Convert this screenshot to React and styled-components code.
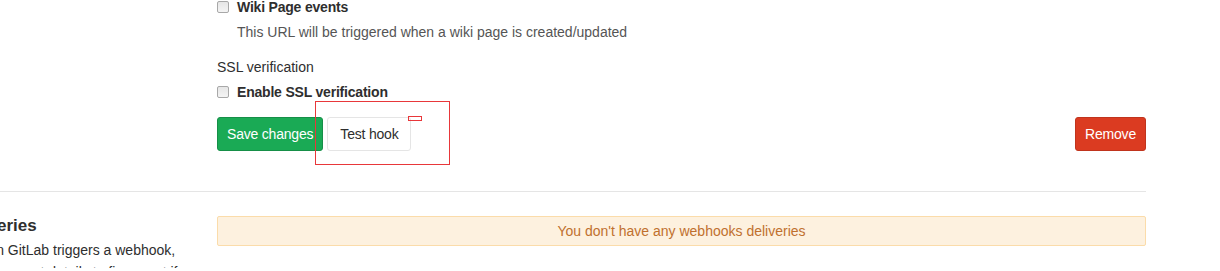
import React from 'react';
import styled, { createGlobalStyle } from 'styled-components';

const GlobalStyle = createGlobalStyle`
  html, body {
    margin: 0;
    padding: 0;
    background: #fff;
    overflow: hidden;
  }

  body {
    font-family: 'Liberation Sans', Arial, sans-serif;
    font-size: 14px;
    line-height: 20px;
    color: #2e2e2e;
  }
`;

const Page = styled.div`
  position: relative;
  width: 1251px;
  height: 271px;
  margin-left: -105px;
  margin-top: -3px;
`;

const SettingsRow = styled.div`
  display: grid;
  grid-template-columns: 292px 1fr;
  column-gap: 30px;
  align-items: start;
`;

const Column = styled.div`
  padding-top: ${(p) => p.offset || 0}px;
`;

const CheckRow = styled.label`
  display: flex;
  align-items: center;
  gap: 8px;
  height: 20px;
  font-weight: 700;
  letter-spacing: -0.2px;
  color: #2e2e2e;
  cursor: pointer;
`;

const Box = styled.input.attrs({ type: 'checkbox' })`
  appearance: none;
  box-sizing: border-box;
  width: 12px;
  height: 12px;
  margin: 0;
  border: 1px solid #a8a8a8;
  border-radius: 2px;
  background: linear-gradient(#e6e6e6, #f4f4f4);
`;

const HelpText = styled.p`
  margin: 5px 0 0 20px;
  color: #555;
`;

const GroupLabel = styled.div`
  margin: 15px 0 5px;
  color: #2e2e2e;
`;

const Actions = styled.div`
  display: flex;
  align-items: center;
  gap: 4px;
  margin-top: 15px;
`;

const Button = styled.button`
  box-sizing: border-box;
  height: 34px;
  padding: 6px ${(p) => p.pad || 9}px;
  font-family: inherit;
  font-size: 14px;
  line-height: 20px;
  letter-spacing: -0.2px;
  white-space: nowrap;
  border-radius: 3px;
  border: 1px solid ${(p) => p.border};
  background: ${(p) => p.bg};
  color: ${(p) => p.color};
  margin-left: ${(p) => (p.push ? 'auto' : '0')};
  cursor: pointer;
`;

const Divider = styled.hr`
  margin: 40px 0 22px;
  border: 0;
  border-top: 1px solid #e5e5e5;
  width: 1251px;
`;

const Heading = styled.h4`
  margin: 0;
  font-size: 17px;
  line-height: 24px;
  font-weight: 600;
  color: #2e2e2e;
`;

const Lead = styled.p`
  margin: 0;
  padding-top: 1px;
  line-height: 22px;
  color: #2e2e2e;
`;

const Alert = styled.div`
  box-sizing: border-box;
  height: 30px;
  padding: 4px 16px;
  text-align: center;
  background: #fdf1df;
  border: 1px solid #fbdcaa;
  border-radius: 2px;
  color: #c0702e;
`;

const Annotation = styled.div`
  position: absolute;
  box-sizing: border-box;
  left: ${(p) => p.x}px;
  top: ${(p) => p.y}px;
  width: ${(p) => p.w}px;
  height: ${(p) => p.h}px;
  border: 1px solid #e8373a;
  pointer-events: none;
`;

export default function App() {
  return (
    <>
      <GlobalStyle />
      <Page>
        <SettingsRow>
          <Column />
          <Column>
            <CheckRow>
              <Box />
              Wiki Page events
            </CheckRow>
            <HelpText>This URL will be triggered when a wiki page is created/updated</HelpText>
            <GroupLabel>SSL verification</GroupLabel>
            <CheckRow>
              <Box />
              Enable SSL verification
            </CheckRow>
            <Actions>
              <Button bg="#1aaa55" border="#168f48" color="#fff">Save changes</Button>
              <Button pad={12} bg="#fff" border="#e5e5e5" color="#2e2e2e">Test hook</Button>
              <Button push bg="#db3b21" border="#c0341d" color="#fff">Remove</Button>
            </Actions>
          </Column>
        </SettingsRow>
        <Divider />
        <SettingsRow>
          <Column>
            <Heading>Recent Deliveries</Heading>
            <Lead>
              When an event in GitLab triggers a webhook, you can use the request details to figure out if something went wrong.
            </Lead>
          </Column>
          <Column offset={2}>
            <Alert>You don't have any webhooks deliveries</Alert>
          </Column>
        </SettingsRow>
        <Annotation x={420} y={104} w={135} h={64} />
        <Annotation x={513} y={119} w={14} h={5} />
      </Page>
    </>
  );
}
